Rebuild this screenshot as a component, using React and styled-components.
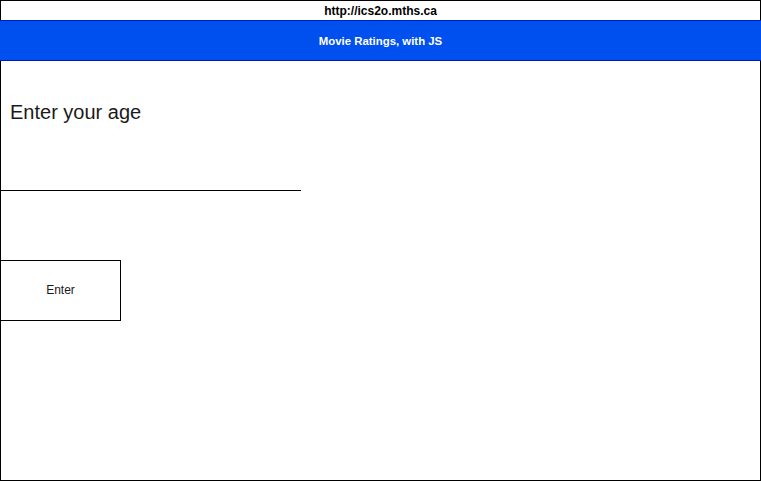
import React from "react";
import styled, { createGlobalStyle } from "styled-components";

const Global = createGlobalStyle`
  html, body { margin: 0; padding: 0; background: #ffffff; }
  body { font-family: "Liberation Sans", Arial, Helvetica, sans-serif; }
`;

const Frame = styled.div`
  box-sizing: border-box;
  width: 761px;
  height: 481px;
  border: 1px solid #000000;
  display: flex;
  flex-direction: column;
  background: #ffffff;
`;

const UrlBar = styled.div`
  height: 19px;
  display: flex;
  align-items: center;
  justify-content: center;
  font-size: 12px;
  font-weight: bold;
  color: #000000;
`;

const Header = styled.div`
  box-sizing: border-box;
  height: 41px;
  margin: 0 -1px;
  background: #0050ef;
  border-top: 1px solid #001dbc;
  border-bottom: 1px solid #001dbc;
  display: flex;
  align-items: center;
  justify-content: center;
  color: #ffffff;
  font-size: 11.4px;
  font-weight: bold;
`;

const Content = styled.div`
  display: flex;
  flex-direction: column;
  align-items: flex-start;
  margin-left: -1px;
`;

const Label = styled.div`
  margin-top: 39px;
  margin-left: 10px;
  font-size: 20px;
  line-height: 24px;
  color: #1a1a1a;
`;

const InputLine = styled.div`
  margin-top: 66px;
  width: 301px;
  height: 1px;
  background: #000000;
`;

const EnterButton = styled.button`
  box-sizing: border-box;
  margin-top: 69px;
  width: 121px;
  height: 61px;
  padding: 0 0 2px 0;
  border: 1px solid #000000;
  background: #ffffff;
  font-family: "Liberation Sans", Arial, Helvetica, sans-serif;
  font-size: 12px;
  color: #1a1a1a;
  display: flex;
  align-items: center;
  justify-content: center;
`;

export default function App() {
  return (
    <>
      <Global />
      <Frame>
        <UrlBar>http://ics2o.mths.ca</UrlBar>
        <Header>Movie Ratings, with JS</Header>
        <Content>
          <Label>Enter your age</Label>
          <InputLine />
          <EnterButton>Enter</EnterButton>
        </Content>
      </Frame>
    </>
  );
}
